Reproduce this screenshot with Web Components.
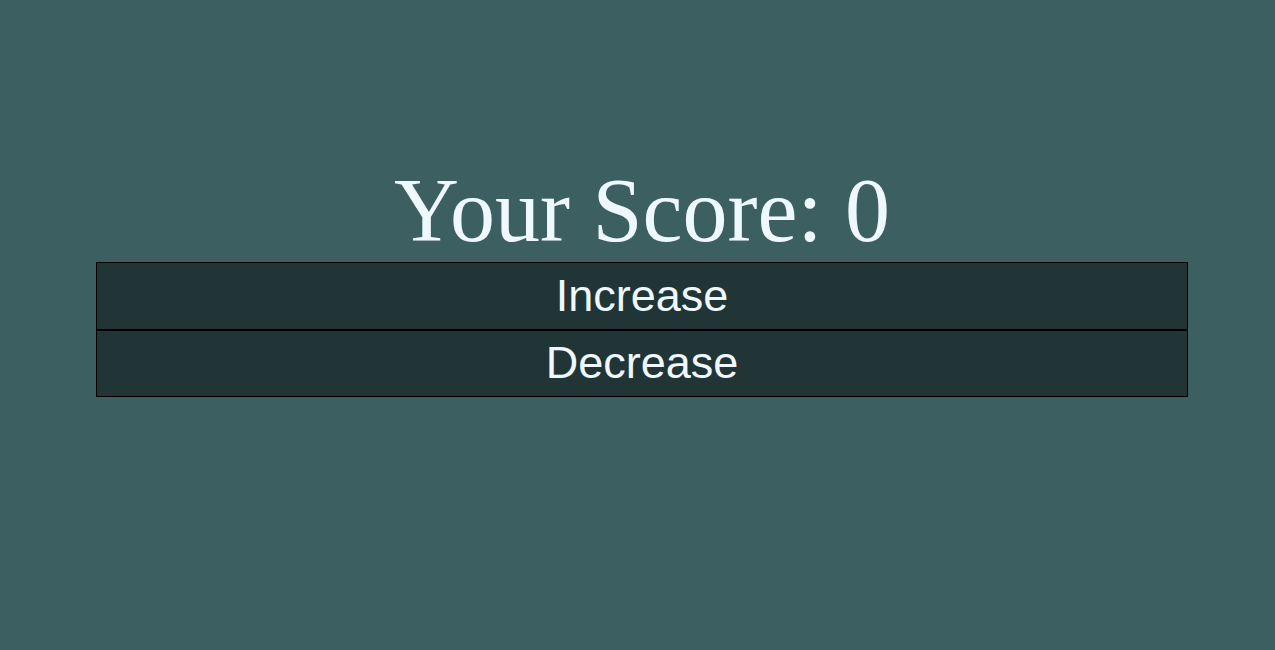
<!DOCTYPE html>
<html lang="en">
<head>
<meta charset="utf-8">
<meta name="viewport" content="width=device-width, initial-scale=1">
<title>Score</title>
<style>
  body { margin: 0; min-height: 100vh; background: #3c6061; color: aliceblue; font-family: "Liberation Serif", "Times New Roman", serif; }
</style>
</head>
<body>
<score-counter></score-counter>
<script>
  class ScoreButton extends HTMLElement {
    constructor() {
      super();
      this.attachShadow({ mode: "open" }).innerHTML = `
        <style>
          :host { display: grid; }
          button {
            margin: 0; padding: 0; border: 1px solid #000; border-radius: 0;
            background: #213537; color: inherit; cursor: pointer;
            font: 45px "Liberation Sans", Arial, sans-serif;
          }
        </style>
        <button type="button"><slot></slot></button>`;
    }
  }
  customElements.define("score-button", ScoreButton);

  class ScoreCounter extends HTMLElement {
    constructor() {
      super();
      this.score = 0;
      const root = this.attachShadow({ mode: "open" });
      root.innerHTML = `
        <style>
          :host { display: block; padding: 160px 87px 32px 96px; }
          h1 { margin: 0; font-size: 90px; font-weight: 400; line-height: 102px; text-align: center; }
          .actions { display: grid; grid-auto-rows: 1fr; min-height: 135px; }
        </style>
        <h1>Your Score: <output>0</output></h1>
        <div class="actions">
          <score-button id="up">Increase</score-button>
          <score-button id="down">Decrease</score-button>
        </div>`;
      root.getElementById("up").addEventListener("click", () => this.change(1));
      root.getElementById("down").addEventListener("click", () => this.change(-1));
    }
    change(step) {
      this.score += step;
      this.shadowRoot.querySelector("output").textContent = this.score;
    }
  }
  customElements.define("score-counter", ScoreCounter);
</script>
</body>
</html>
